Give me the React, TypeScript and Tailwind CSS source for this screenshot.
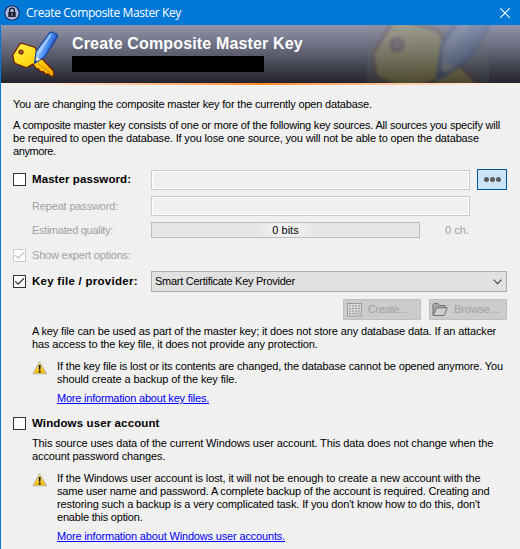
import React from 'react';

const KeyIcon: React.FC<{ className: string }> = ({ className }) => (
  <svg viewBox="0 0 48 48" className={className} fill="none">
    <defs>
      <linearGradient id="gold" x1="0" y1="0" x2="0.7" y2="1">
        <stop offset="0" stopColor="#fff04a" />
        <stop offset="0.5" stopColor="#ffdb1a" />
        <stop offset="1" stopColor="#f8b000" />
      </linearGradient>
      <linearGradient id="pencil" x1="0.3" y1="0.4" x2="0.75" y2="0.65">
        <stop offset="0" stopColor="#9cc8ff" />
        <stop offset="0.45" stopColor="#4c8df0" />
        <stop offset="1" stopColor="#1d4fc4" />
      </linearGradient>
    </defs>
    <path
      d="M1.8 25 L8.5 14.5 Q9.7 13 11.5 13.5 L23 17 Q25 18 25.2 20 L27 26.5 L31 28.8 L42.2 40.5 L43 46.4 L39.2 45.8 L37.2 43.8 L34.6 44.4 L32.4 41.6 L29.8 41.8 L27.6 39 L25 38.4 L22 34 L17 37 Q15.5 37.7 13.5 37 L4.5 33.5 Q3 32.8 2.8 31 Z"
      fill="url(#gold)"
      stroke="#6b1a00"
      strokeWidth="1.2"
      strokeLinejoin="round"
    />
    <path d="M27 33.5 L40.5 44" stroke="#c98200" strokeWidth="0.9" />
    <circle cx="10" cy="22" r="2" fill="#a0623c" stroke="#6b1a00" strokeWidth="1.2" />
    <path
      d="M38.2 3.2 Q39.2 1.7 41 2.2 L45.4 4 Q47 4.9 46.4 6.6 L33.6 27 L23.6 33.4 L25 21.6 Z"
      fill="url(#pencil)"
      stroke="#153d98"
      strokeWidth="1.1"
      strokeLinejoin="round"
    />
    <path d="M25.4 27 L29.3 29.3 L24.2 32.6 Z" fill="#e8e2dc" />
    <path d="M24.4 30 L26.4 31.4 L23.6 33.2 Z" fill="#173a8c" />
    <path d="M39.8 4.8 L27.6 23.4" stroke="#b8d8ff" strokeWidth="1.1" />
  </svg>
);

const WarningIcon = () => (
  <svg viewBox="0 0 16 16" className="h-4 w-4 shrink-0">
    <defs>
      <linearGradient id="warn" x1="0" y1="0" x2="0" y2="1">
        <stop offset="0" stopColor="#f8e26a" />
        <stop offset="1" stopColor="#f5b400" />
      </linearGradient>
    </defs>
    <path d="M7.6 1.6 L14.6 13.8 H0.8 Z" fill="url(#warn)" stroke="#b9b9b0" strokeWidth="1" strokeLinejoin="round" />
    <path d="M6.7 5 H8.7 L8.3 10.2 H7.1 Z M6.8 11 H8.6 V12.7 H6.8 Z" fill="#1c1c1c" />
  </svg>
);

const Checkbox: React.FC<{ checked?: boolean; disabled?: boolean }> = ({ checked, disabled }) => (
  <span
    className={`mr-1.5 flex h-[13px] w-[13px] shrink-0 items-center justify-center border bg-white ${
      disabled ? 'border-[#cccccc] text-[#bcbcbc]' : 'border-[#333333] text-[#222222]'
    }`}
  >
    {checked && (
      <svg viewBox="0 0 11 11" className="h-[11px] w-[11px]" fill="none" stroke="currentColor" strokeWidth="1.2">
        <path d="M1.2 5.3 L4.1 8.2 L10 2.3" />
      </svg>
    )}
  </span>
);

const Line: React.FC<{ className?: string; children: React.ReactNode }> = ({ className = '', children }) => (
  <div className={`h-[13px] ${className}`}>
    <span>{children}</span>
  </div>
);

const App: React.FC = () => {
  return (
    <div className="h-[549px] w-[520px] overflow-hidden border-l border-[#0078d7] bg-[#f0f0f0] font-['Liberation_Sans',Arial,sans-serif] text-[11px] leading-[13px] whitespace-nowrap text-black">
      <header className="flex h-[25px] items-center bg-[#0078d7] pr-[10px] pl-[3px] text-white">
        <svg viewBox="0 0 16 16" className="h-4 w-4" fill="none">
          <circle cx="8" cy="8" r="7.2" fill="#aab8e4" stroke="#1c2753" strokeWidth="1.1" />
          <path d="M5.6 7.5 V5.6 a2.4 2.4 0 0 1 4.8 0 V7.5" stroke="#15151f" strokeWidth="1.3" />
          <rect x="4.3" y="7" width="7.4" height="5" rx="0.6" fill="#20202c" />
          <path d="M8 8.5 V10.5" stroke="#dfe5fa" strokeWidth="1" />
        </svg>
        <h1 className="ml-1.5 font-['Open_Sans','Noto_Sans',sans-serif] text-[12px] leading-4 tracking-[-0.4px]">
          Create Composite Master Key
        </h1>
        <svg viewBox="0 0 10 10" className="ml-auto h-[10px] w-[10px]" stroke="white" strokeWidth="1.1">
          <path d="M0.3 0.3 L9.7 9.7 M9.7 0.3 L0.3 9.7" />
        </svg>
      </header>

      <section className="relative flex h-[58px] overflow-hidden bg-linear-to-b from-[#9294ab] via-[#5d5f70] to-[#23242c] pl-[10px]">
        <div className="absolute top-0 left-[366px] h-full w-[122px] bg-[#71806f]/15" />
        <div className="absolute -top-[46px] left-[366px] opacity-15">
          <KeyIcon className="h-36 w-36 blur-[1.5px]" />
        </div>
        <KeyIcon className="relative mt-[5px] h-12 w-12 shrink-0" />
        <div className="relative ml-[13px] pt-[10px]">
          <h2 className="text-[16px] leading-[18px] font-bold tracking-[0.15px] text-white">Create Composite Master Key</h2>
          <div className="mt-[3px] h-4 w-[192px] bg-black" />
        </div>
      </section>
      <div className="h-[2px] bg-linear-to-r from-[#f8f0e8] from-5% via-[#ff8a1c] via-50% to-[#f8f0e8] to-95%" />

      <main className="pt-[13px] pl-3">
        <Line className="tracking-[-0.178px]">You are changing the composite master key for the currently open database.</Line>
        <div className="mt-2">
          <Line className="tracking-[-0.2px]">
            A composite master key consists of one or more of the following key sources. All sources you specify will
          </Line>
          <Line className="tracking-[-0.162px]">
            be required to open the database. If you lose one source, you will not be able to open the database
          </Line>
          <Line className="tracking-[-0.4px]">anymore.</Line>
        </div>

        <div className="mt-[11px] flex h-[21px] items-center">
          <Checkbox />
          <Line className="w-[119px] text-[11.5px] font-bold tracking-[0.08px]">Master password:</Line>
          <div className="mt-px h-5 w-[319px] border border-[#cccccc] bg-[#f0f0f0] inset-ring inset-ring-white" />
          <button className="ml-[7px] flex h-[21px] w-[30px] items-center justify-center gap-px border border-[#00559b] bg-[#cce4f7]">
            <span className="h-[5px] w-[5px] rounded-full bg-[#5c5c5c]" />
            <span className="h-[5px] w-[5px] rounded-full bg-[#5c5c5c]" />
            <span className="h-[5px] w-[5px] rounded-full bg-[#5c5c5c]" />
          </button>
        </div>
        <div className="mt-[6px] flex h-5 items-center pl-[19px] text-[#a0a0a0]">
          <Line className="w-[119px] tracking-[-0.16px]">Repeat password:</Line>
          <div className="h-5 w-[319px] border border-[#cccccc] bg-[#f0f0f0] inset-ring inset-ring-white" />
        </div>
        <div className="mt-[6px] flex h-4 items-center pl-[19px] text-[#a0a0a0]">
          <Line className="w-[119px] tracking-[-0.33px]">Estimated quality:</Line>
          <div className="flex h-4 w-[269px] items-center justify-center border border-[#bcbcbc] bg-[#e6e6e6] bg-radial-[closest-side] from-[#f6f6f6] to-[#e6e6e6] bg-[length:60px_30px] bg-center bg-no-repeat text-black">
            <Line>0 bits</Line>
          </div>
          <Line className="ml-[25px]">0 ch.</Line>
        </div>
        <div className="mt-[11px] flex h-[13px] items-center text-[#a0a0a0]">
          <Checkbox checked disabled />
          <Line className="tracking-[-0.2px]">Show expert options:</Line>
        </div>

        <div className="mt-[9px] flex h-[21px] items-center">
          <Checkbox checked />
          <Line className="w-[119px] text-[11.5px] font-bold tracking-[0.27px]">Key file / provider:</Line>
          <div className="flex h-[21px] w-[356px] items-center justify-between border border-[#adadad] bg-[#e1e1e1] pr-1 pl-[3px]">
            <Line className="tracking-[-0.27px]">Smart Certificate Key Provider</Line>
            <svg viewBox="0 0 9 6" className="h-[6px] w-[9px]" fill="none" stroke="#444444" strokeWidth="1.1">
              <path d="M0.5 0.7 L4.5 4.7 L8.5 0.7" />
            </svg>
          </div>
        </div>
        <div className="mt-[7px] flex justify-end gap-2 pr-[13px] text-[#a0a0a0]">
          <button className="flex h-[21px] w-[78px] items-center border border-[#bfbfbf] bg-[#cccccc] pl-[3px]">
            <svg viewBox="0 0 16 16" className="mr-[5px] h-4 w-4" fill="none">
              <rect x="0.5" y="1.5" width="14" height="12.5" fill="#dcdcdc" stroke="#999999" />
              <path d="M2 4 H13 M2 6.5 H13 M2 9 H13 M2 11.5 H9" stroke="#8d8d8d" strokeDasharray="2 1" />
              <circle cx="11.5" cy="11.5" r="3" fill="#c4c4c4" stroke="#b8b8b8" strokeWidth="1.5" strokeDasharray="1.5 0.8" />
            </svg>
            <Line className="tracking-[-0.33px]">Create...</Line>
          </button>
          <button className="flex h-[21px] w-[78px] items-center border border-[#bfbfbf] bg-[#cccccc] pl-[2px]">
            <svg viewBox="0 0 16 16" className="mr-[6px] h-4 w-4" strokeLinejoin="round">
              <path d="M1 13 V2.5 L2 1.5 H6 L7.5 3.5 H13 V6" fill="#a6a6a6" stroke="#707070" />
              <path d="M1.2 13.5 L4.5 5.8 H15.3 L12 13.5 Z" fill="#cfcfcf" stroke="#707070" />
            </svg>
            <Line className="tracking-[-0.15px]">Browse...</Line>
          </button>
        </div>

        <div className="mt-[5px] pl-[19px]">
          <Line className="tracking-[-0.145px]">
            A key file can be used as part of the master key; it does not store any database data. If an attacker
          </Line>
          <Line className="tracking-[-0.135px]">has access to the key file, it does not provide any protection.</Line>
          <div className="mt-[9px] flex">
            <WarningIcon />
            <div className="ml-[9px]">
              <Line className="tracking-[-0.147px]">
                If the key file is lost or its contents are changed, the database cannot be opened anymore. You
              </Line>
              <Line className="tracking-[-0.115px]">should create a backup of the key file.</Line>
              <Line className="mt-[6px] tracking-[-0.21px] text-[#0000ff] underline">More information about key files.</Line>
            </div>
          </div>
        </div>

        <div className="mt-[12px] flex h-[13px] items-center">
          <Checkbox />
          <Line className="text-[11.5px] font-bold tracking-[0.12px]">Windows user account</Line>
        </div>
        <div className="mt-[7px] pl-[19px]">
          <Line className="tracking-[-0.12px]">
            This source uses data of the current Windows user account. This data does not change when the
          </Line>
          <Line className="tracking-[-0.12px]">account password changes.</Line>
          <div className="mt-[9px] flex">
            <WarningIcon />
            <div className="ml-[9px]">
              <Line className="tracking-[-0.11px]">
                If the Windows user account is lost, it will not be enough to create a new account with the
              </Line>
              <Line className="tracking-[-0.175px]">
                same user name and password. A complete backup of the account is required. Creating and
              </Line>
              <Line className="tracking-[-0.13px]">
                restoring such a backup is a very complicated task. If you don't know how to do this, don't
              </Line>
              <Line className="tracking-[-0.2px]">enable this option.</Line>
              <Line className="mt-[6px] tracking-[-0.163px] text-[#0000ff] underline">
                More information about Windows user accounts.
              </Line>
            </div>
          </div>
        </div>
      </main>
    </div>
  );
};

export default App;
